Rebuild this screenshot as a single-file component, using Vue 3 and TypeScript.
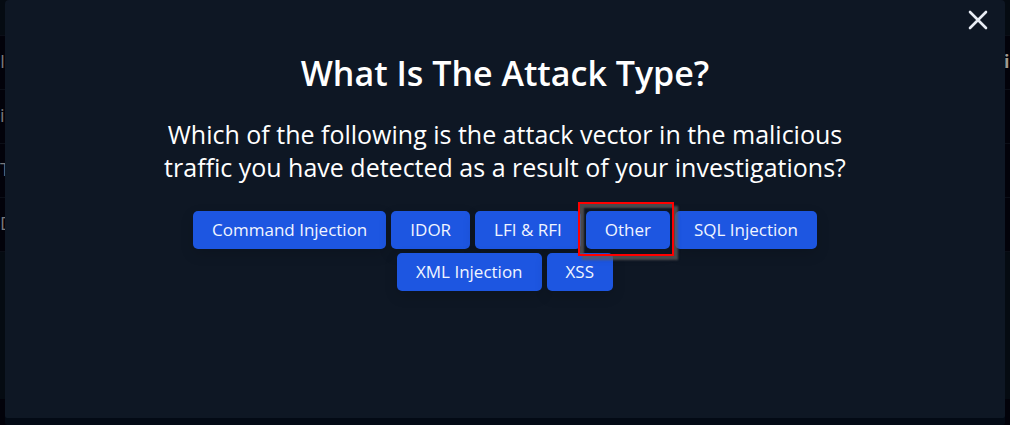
<script setup lang="ts">
interface AttackType {
  label: string
  highlighted?: boolean
}

const attackTypes: AttackType[] = [
  { label: 'Command Injection' },
  { label: 'IDOR' },
  { label: 'LFI & RFI' },
  { label: 'Other', highlighted: true },
  { label: 'SQL Injection' },
  { label: 'XML Injection' },
  { label: 'XSS' },
]

const backdropRows = [
  { start: 'I', end: 'i' },
  { start: 'ic', end: '' },
  { start: 'T', end: '' },
  { start: 'D', end: '' },
]
</script>

<template>
  <div class="page">
    <div class="backdrop" aria-hidden="true">
      <div v-for="(row, index) in backdropRows" :key="index" class="backdrop-row">
        <span>{{ row.start }}</span>
        <span class="row-end">{{ row.end }}</span>
      </div>
      <div class="backdrop-panel"></div>
    </div>

    <section class="dialog" role="dialog" aria-modal="true" aria-labelledby="dialog-title">
      <button class="close" type="button" aria-label="Close">
        <svg viewBox="0 0 20 20" width="20" height="20" aria-hidden="true">
          <path d="M2 2 L18 18 M18 2 L2 18" fill="none" stroke="currentColor" stroke-width="2.6" stroke-linecap="round" />
        </svg>
      </button>
      <h1 id="dialog-title">What Is The Attack Type?</h1>
      <p>
        Which of the following is the attack vector in the malicious traffic you have detected as
        a result of your investigations?
      </p>
      <div class="options">
        <div
          v-for="type in attackTypes"
          :key="type.label"
          class="option"
          :class="{ highlighted: type.highlighted }"
        >
          <button type="button">{{ type.label }}</button>
        </div>
      </div>
    </section>
  </div>
</template>

<style>
body {
  margin: 0;
  background: #02020a;
}
</style>

<style scoped>
.page {
  position: relative;
  min-height: 100vh;
  box-sizing: border-box;
  padding: 0 5px 7px;
  overflow: hidden;
  background: #030914;
  color: #ffffff;
  font-family: 'Segoe UI', 'Open Sans', sans-serif;
}

.backdrop {
  position: absolute;
  inset: 0;
  display: flex;
  flex-direction: column;
  padding-top: 35px;
  background: #050b12;
  color: #77787c;
  font-size: 18px;
}

.backdrop-row {
  display: flex;
  align-items: center;
  justify-content: space-between;
  box-sizing: border-box;
  height: 54px;
  padding-bottom: 4px;
  border-top: 1px solid #0b0e17;
  background: #02020a;
}

.row-end {
  width: 6px;
  color: #a19a91;
  font-weight: 700;
}

.backdrop-panel {
  flex: 1;
  border-top: 1px solid #0b0e17;
  border-bottom: 26px solid #02020a;
}

.dialog {
  position: relative;
  display: flex;
  flex-direction: column;
  align-items: center;
  box-sizing: border-box;
  min-height: calc(100vh - 7px);
  padding: 48px 24px 24px;
  border-radius: 4px 4px 2px 2px;
  background: #0e1724;
  box-shadow: 0 7px 0 #030a15;
  text-align: center;
}

.close {
  position: absolute;
  top: 10px;
  right: 17px;
  display: flex;
  padding: 0;
  border: 0;
  background: none;
  color: #e8edf5;
  cursor: pointer;
}

h1 {
  margin: 0;
  font-size: 34px;
  font-weight: 600;
  line-height: 50px;
}

p {
  max-width: 730px;
  margin: 20px 0 0;
  font-size: 25px;
  line-height: 33px;
}

.options {
  display: flex;
  flex-wrap: wrap;
  justify-content: center;
  gap: 4px 5px;
  max-width: 684px;
  margin-top: 27px;
}

.option {
  position: relative;
}

.option button {
  height: 38px;
  padding: 0 19px;
  border: 0;
  border-radius: 5px;
  background: #1d56e1;
  box-shadow: 0 5px 14px rgba(0, 0, 0, 0.14);
  color: #f1f5ff;
  font-family: 'Segoe UI', 'Open Sans', sans-serif;
  font-size: 17px;
  line-height: 38px;
  cursor: pointer;
}

.highlighted {
  z-index: 1;
}

.highlighted::after {
  content: '';
  position: absolute;
  inset: -9px -4px -7px -8px;
  border: 2px solid #ff0000;
  box-shadow:
    4px 4px 2px rgba(95, 92, 92, 0.75),
    inset 4px 4px 2px rgba(95, 92, 92, 0.75);
  pointer-events: none;
}
</style>
